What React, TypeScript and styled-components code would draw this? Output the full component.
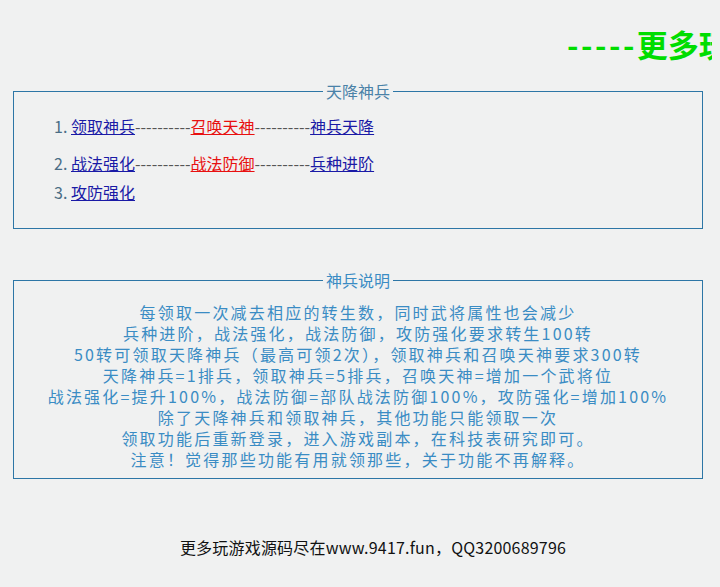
import styled, { createGlobalStyle } from "styled-components";

const GlobalStyle = createGlobalStyle`
  html, body {
    margin: 0;
    padding: 0;
  }
  body {
    margin: 8px;
    background-color: #f0f1f1;
    font-family: "Noto Sans CJK SC", "Noto Sans", sans-serif;
    overflow: hidden;
  }
`;

const rows = [
  [
    { text: "领取神兵", red: false },
    { text: "召唤天神", red: true },
    { text: "神兵天降", red: false },
  ],
  [
    { text: "战法强化", red: false },
    { text: "战法防御", red: true },
    { text: "兵种进阶", red: false },
  ],
  [{ text: "攻防强化", red: false }],
];

const notes = [
  "每领取一次减去相应的转生数，同时武将属性也会减少",
  "兵种进阶，战法强化，战法防御，攻防强化要求转生100转",
  "50转可领取天降神兵（最高可领2次），领取神兵和召唤天神要求300转",
  "天降神兵=1排兵，领取神兵=5排兵，召唤天神=增加一个武将位",
  "战法强化=提升100%，战法防御=部队战法防御100%，攻防强化=增加100%",
  "除了天降神兵和领取神兵，其他功能只能领取一次",
  "领取功能后重新登录，进入游戏副本，在科技表研究即可。",
  "注意！觉得那些功能有用就领那些，关于功能不再解释。",
];

const App = () => {
  return (
    <>
      <GlobalStyle />
      <Header>
        <HeaderDash>-----</HeaderDash>更多玩游戏源码尽在www.9417.fun
      </Header>
      <Box>
        <Legend $color="#4a82a8">天降神兵</Legend>
        <List>
          {rows.map((row, i) => (
            <Item key={i} $gap={i === 0 ? 15 : 7}>
              {row.map((link, j) => (
                <span key={j}>
                  {j > 0 && <Dash>----------</Dash>}
                  <Link href="#" $red={link.red}>
                    {link.text}
                  </Link>
                </span>
              ))}
            </Item>
          ))}
        </List>
      </Box>
      <Box $top={40}>
        <Legend $color="#3a8cc4">神兵说明</Legend>
        <Notes>
          {notes.map((line, i) => (
            <Line key={i}>{line}</Line>
          ))}
        </Notes>
      </Box>
      <Footer>更多玩游戏源码尽在www.9417.fun，QQ3200689796</Footer>
    </>
  );
};

const Header = styled.div`
  height: 72px;
  line-height: 72px;
  padding-left: 559px;
  white-space: nowrap;
  overflow: hidden;
  color: #00dd00;
  font-size: 31px;
  font-weight: bold;
`;

const HeaderDash = styled.span`
  letter-spacing: 2.5px;
`;

const Box = styled.fieldset<{ $top?: number }>`
  box-sizing: border-box;
  width: 690px;
  margin: ${(p) => p.$top || 0}px 0 0 5px;
  padding: 0;
  border: 1px solid #2d76a6;
`;

const Legend = styled.legend<{ $color: string }>`
  margin: 0 auto;
  padding: 0 3px;
  font-size: 16px;
  line-height: 22px;
  color: ${(p) => p.$color};
`;

const List = styled.ol`
  margin: 13px 0 25px 0;
  padding-left: 57px;
  color: #4a6d85;
  font-size: 16px;
  line-height: 22px;
`;

const Item = styled.li<{ $gap: number }>`
  margin-bottom: ${(p) => p.$gap}px;
  &:last-child {
    margin-bottom: 0;
  }
`;

const Dash = styled.span`
  color: #555;
`;

const Link = styled.a<{ $red: boolean }>`
  color: ${(p) => (p.$red ? "#e81010" : "#1a1aa6")};
  text-decoration: underline;
`;

const Notes = styled.div`
  padding: 11px 0 8px 0;
  text-align: center;
  color: #3a8cc4;
  font-size: 16px;
  line-height: 21px;
  letter-spacing: 2.2px;
`;

const Line = styled.div`
  height: 21px;
  white-space: nowrap;
`;

const Footer = styled.div`
  margin-top: 57px;
  padding-left: 26px;
  text-align: center;
  color: #111;
  font-size: 16px;
  line-height: 22px;
  letter-spacing: 0.2px;
`;

export default App;
